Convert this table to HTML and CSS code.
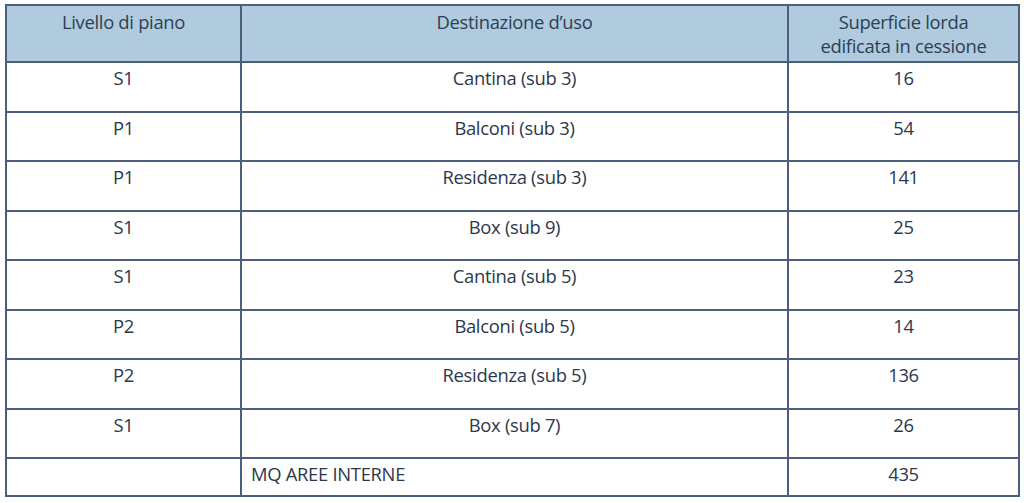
FILE: index.html
```html
<!DOCTYPE html>
<html lang="it">
<head>
<meta charset="utf-8">
<title>Tabella superfici</title>
<link rel="stylesheet" href="styles.css">
</head>
<body>
<table class="tbl">
  <colgroup>
    <col class="c1"><col class="c2"><col class="c3">
  </colgroup>
  <thead>
    <tr class="head">
      <th>Livello di piano</th>
      <th>Destinazione d’uso</th>
      <th>Superficie lorda<br>edificata in cessione</th>
    </tr>
  </thead>
  <tbody>
    <tr class="row"><td>S1</td><td>Cantina (sub 3)</td><td>16</td></tr>
    <tr class="row"><td>P1</td><td>Balconi (sub 3)</td><td>54</td></tr>
    <tr class="row"><td>P1</td><td>Residenza (sub 3)</td><td>141</td></tr>
    <tr class="row"><td>S1</td><td>Box (sub 9)</td><td>25</td></tr>
    <tr class="row"><td>S1</td><td>Cantina (sub 5)</td><td>23</td></tr>
    <tr class="row"><td>P2</td><td>Balconi (sub 5)</td><td>14</td></tr>
    <tr class="row"><td>P2</td><td>Residenza (sub 5)</td><td>136</td></tr>
    <tr class="row"><td>S1</td><td>Box (sub 7)</td><td>26</td></tr>
    <tr class="total"><td></td><td class="left">MQ AREE INTERNE</td><td>435</td></tr>
  </tbody>
</table>
</body>
</html>
```
FILE: styles.css
```css
html, body {
  margin: 0;
  padding: 0;
  background: #ffffff;
}
body {
  font-family: "Open Sans", "Noto Sans", sans-serif;
  color: #2c384b;
}
.tbl {
  border-collapse: collapse;
  width: 1013px;
  margin: 4px 0 0 5px;
  table-layout: fixed;
  font-size: 18.4px;
  letter-spacing: -0.3px;
}
.c1 { width: 235px; }
.c2 { width: 547px; }
.c3 { width: 231px; }
.tbl th, .tbl td {
  border: 2px solid #4b5e7e;
  text-align: center;
  vertical-align: top;
  font-weight: normal;
  line-height: 24px;
  padding: 3px 8px 0;
}
.head th {
  background: #afcbdd;
  height: 51px;
  padding-top: 4px;
  color: #2d3e56;
}
.row td {
  height: 44.5px;
}
.total td {
  height: 33px;
  padding-top: 3px;
}
.tbl td.left {
  text-align: left;
  padding-left: 9px;
}
```
